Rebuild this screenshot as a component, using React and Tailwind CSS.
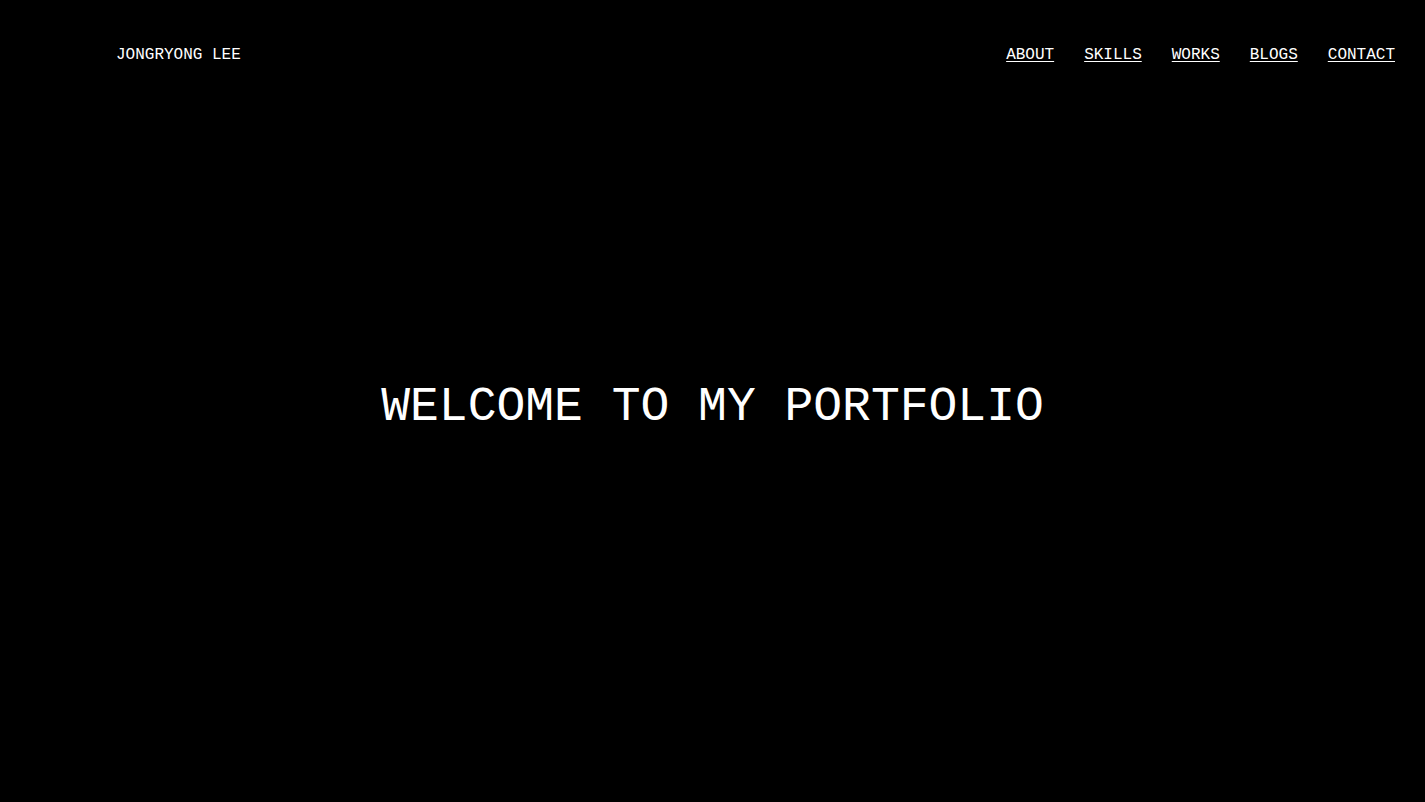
export default function App() {
  const links = ["ABOUT", "SKILLS", "WORKS", "BLOGS", "CONTACT"];
  return (
    <div className="relative h-[802px] w-full bg-black text-white font-['Courier_New','Nimbus_Mono_PS','Nimbus_Mono_L',FreeMono,'Liberation_Mono',monospace] overflow-hidden">
      <header className="absolute left-0 right-0 top-0 flex h-[110px] items-center justify-between pl-[116px] pr-[30px]">
        <div className="text-[16px]">JONGRYONG LEE</div>
        <nav className="flex gap-[30px] text-[16px]">
          {links.map((l) => (
            <a key={l} href="#" className="underline underline-offset-2">
              {l}
            </a>
          ))}
        </nav>
      </header>
      <main className="flex h-full items-center justify-center pt-[12px]">
        <h1 className="text-[48px] leading-none">WELCOME TO MY PORTFOLIO</h1>
      </main>
    </div>
  );
}
